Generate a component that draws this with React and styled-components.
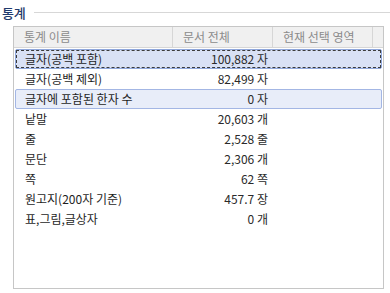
import React from 'react';
import styled, { createGlobalStyle } from 'styled-components';

const rows = [
    { name: '글자(공백 포함)', value: '100,882 자', state: 'focused' },
    { name: '글자(공백 제외)', value: '82,499 자' },
    { name: '글자에 포함된 한자 수', value: '0 자', state: 'hover' },
    { name: '낱말', value: '20,603 개' },
    { name: '줄', value: '2,528 줄' },
    { name: '문단', value: '2,306 개' },
    { name: '쪽', value: '62 쪽' },
    { name: '원고지(200자 기준)', value: '457.7 장' },
    { name: '표,그림,글상자', value: '0 개' },
];

const App = () => {
    return (
        <Page>
            <Global />
            <GroupTitle>
                <span>통계</span>
                <Rule />
            </GroupTitle>
            <ListBox>
                <Header>
                    <HeadCell>통계 이름</HeadCell>
                    <HeadCell>문서 전체</HeadCell>
                    <HeadCell>현재 선택 영역</HeadCell>
                    <HeadCell />
                </Header>
                <Body>
                    {rows.map((r) => (
                        <Row key={r.name} state={r.state}>
                            <Name>{r.name}</Name>
                            <Value>{r.value}</Value>
                            <Value />
                        </Row>
                    ))}
                </Body>
            </ListBox>
        </Page>
    );
};

const Global = createGlobalStyle`
body{
    margin:0;
    background:#fff;
    font-family:"Noto Sans CJK KR","Noto Sans",sans-serif;
}
`;

const Page = styled.div`
width:390px;
height:293px;
box-sizing:border-box;
padding-top:3px;
`;

const GroupTitle = styled.div`
display:flex;
align-items:center;
height:18px;
padding-left:2px;
span{
    color:#1f3a6c;
    font-size:13px;
    font-weight:500;
    letter-spacing:-0.3px;
}
`;

const Rule = styled.div`
flex:1;
margin-left:9px;
border-top:1px solid #d7d7d7;
`;

const ListBox = styled.div`
margin:5px 0 0 13px;
width:371px;
height:263px;
box-sizing:border-box;
border:1px solid #c6c6c6;
`;

const cols = '159px 100px 100px 1fr';

const Header = styled.div`
display:grid;
grid-template-columns:${cols};
height:20px;
background:#f0f0f0;
border-bottom:1px solid #d6d6d6;
`;

const HeadCell = styled.div`
border-right:1px solid #d6d6d6;
color:#8b8b8b;
font-size:12px;
line-height:20px;
padding-left:10px;
white-space:nowrap;
&:last-child{
    border-right:none;
}
`;

const Body = styled.div`
padding:1px 1px 0;
`;

const Row = styled.div`
display:grid;
grid-template-columns:158px 100px 100px 1fr;
height:20px;
box-sizing:border-box;
border:1px solid transparent;
border-radius:2px;
font-size:12px;
color:#1e1e1e;
${(p) => p.state === 'focused' && `
    background:#d9e1f5;
    border-color:#8fa7dc;
    outline:1px dashed #3c3c3c;
    outline-offset:-2px;
`}
${(p) => p.state === 'hover' && `
    background:#e8edf9;
    border-color:#a3b6e4;
`}
`;

const Name = styled.div`
padding-left:9px;
line-height:18px;
white-space:nowrap;
`;

const Value = styled.div`
text-align:right;
padding-right:6px;
line-height:18px;
color:#2a2a2a;
white-space:nowrap;
`;

export default App;
